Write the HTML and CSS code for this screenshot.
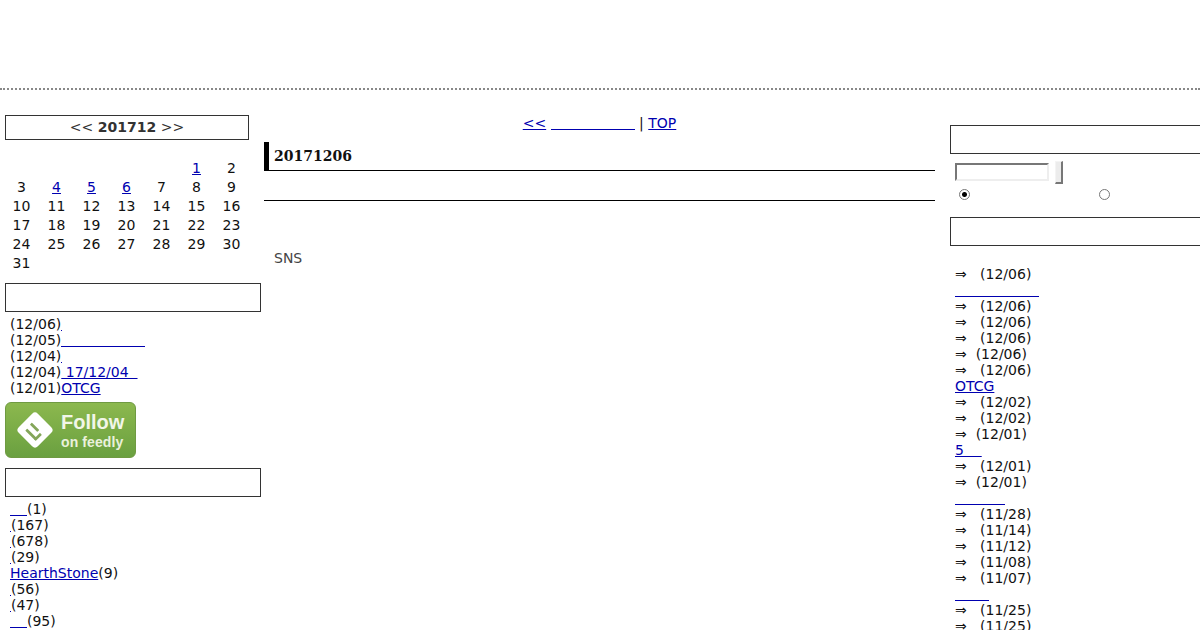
FILE: index.html
```html
<!DOCTYPE html>
<html lang="en">
<head>
    <meta charset="UTF-8">
    <meta name="viewport" content="width=device-width, initial-scale=1.0">
    <title>20171206</title>
    <link rel="stylesheet" href="styles.css">
</head>
<body>
    <div class="header"></div>

    <div class="main">
        <div class="left">
            <div class="cal-title">&lt;&lt; <b>201712</b> &gt;&gt;</div>
            <table class="calendar">
                <tr><td></td><td></td><td></td><td></td><td></td><td><a href="#">1</a></td><td>2</td></tr>
                <tr><td>3</td><td><a href="#">4</a></td><td><a href="#">5</a></td><td><a href="#">6</a></td><td>7</td><td>8</td><td>9</td></tr>
                <tr><td>10</td><td>11</td><td>12</td><td>13</td><td>14</td><td>15</td><td>16</td></tr>
                <tr><td>17</td><td>18</td><td>19</td><td>20</td><td>21</td><td>22</td><td>23</td></tr>
                <tr><td>24</td><td>25</td><td>26</td><td>27</td><td>28</td><td>29</td><td>30</td></tr>
                <tr><td>31</td><td></td><td></td><td></td><td></td><td></td><td></td></tr>
            </table>

            <div class="box"></div>
            <ul class="list">
                <li>(12/06)<a href="#" class="blank w1"></a></li>
                <li>(12/05)<a href="#" class="blank w84"></a></li>
                <li>(12/04)<a href="#" class="blank w1"></a></li>
                <li>(12/04)<a href="#">&nbsp;17/12/04&nbsp;&nbsp;</a></li>
                <li>(12/01)<a href="#">OTCG</a></li>
            </ul>

            <a href="#" class="feedly">
                <svg class="feedly-icon" width="38" height="38" viewBox="0 0 38 38">
                    <rect x="5.5" y="5.5" width="27" height="27" rx="4" transform="rotate(45 19 19)" fill="#fff"/>
                    <g fill="#84a65a" transform="rotate(45 19 19)">
                        <rect x="11.5" y="16" width="10.5" height="2.8" rx="0.6"/>
                        <rect x="12.5" y="23.5" width="13" height="2.8" rx="0.6"/>
                        <rect x="24.5" y="17.5" width="2.8" height="8.8" rx="0.6"/>
                    </g>
                </svg>
                <span class="feedly-text">
                    <span class="feedly-follow">Follow</span>
                    <span class="feedly-on">on feedly</span>
                </span>
            </a>

            <div class="box box-cats"></div>
            <ul class="list">
                <li><a href="#" class="blank w17"></a>(1)</li>
                <li><a href="#" class="blank w1"></a>(167)</li>
                <li><a href="#" class="blank w1"></a>(678)</li>
                <li><a href="#" class="blank w1"></a>(29)</li>
                <li><a href="#">HearthStone</a>(9)</li>
                <li><a href="#" class="blank w1"></a>(56)</li>
                <li><a href="#" class="blank w1"></a>(47)</li>
                <li><a href="#" class="blank w17"></a>(95)</li>
            </ul>
        </div>

        <div class="center">
            <div class="nav"><a href="#">&lt;&lt;</a> <a href="#" class="blank w84"></a> | <a href="#">TOP</a></div>
            <h2 class="entry-title">20171206</h2>
            <div class="entry-body"></div>
            <p class="sns">SNS</p>
        </div>

        <div class="right">
            <div class="box"></div>
            <div class="search">
                <span class="search-input"></span>
                <span class="search-button"></span>
            </div>
            <div class="radios">
                <span class="radio checked"></span>
                <span class="radio"></span>
            </div>
            <div class="box box-recent"></div>
            <ul class="list recent">
                <li>⇒&nbsp;&nbsp;&nbsp;(12/06)</li>
                <li><a href="#" class="blank w84"></a></li>
                <li>⇒&nbsp;&nbsp;&nbsp;(12/06)</li>
                <li>⇒&nbsp;&nbsp;&nbsp;(12/06)</li>
                <li>⇒&nbsp;&nbsp;&nbsp;(12/06)</li>
                <li>⇒&nbsp;&nbsp;(12/06)</li>
                <li>⇒&nbsp;&nbsp;&nbsp;(12/06)</li>
                <li><a href="#">OTCG</a></li>
                <li>⇒&nbsp;&nbsp;&nbsp;(12/02)</li>
                <li>⇒&nbsp;&nbsp;&nbsp;(12/02)</li>
                <li>⇒&nbsp;&nbsp;(12/01)</li>
                <li><a href="#">5&nbsp;&nbsp;&nbsp;&nbsp;</a></li>
                <li>⇒&nbsp;&nbsp;&nbsp;(12/01)</li>
                <li>⇒&nbsp;&nbsp;(12/01)</li>
                <li><a href="#" class="blank w50"></a></li>
                <li>⇒&nbsp;&nbsp;&nbsp;(11/28)</li>
                <li>⇒&nbsp;&nbsp;&nbsp;(11/14)</li>
                <li>⇒&nbsp;&nbsp;&nbsp;(11/12)</li>
                <li>⇒&nbsp;&nbsp;&nbsp;(11/08)</li>
                <li>⇒&nbsp;&nbsp;&nbsp;(11/07)</li>
                <li><a href="#" class="blank w34"></a></li>
                <li>⇒&nbsp;&nbsp;&nbsp;(11/25)</li>
                <li>⇒&nbsp;&nbsp;&nbsp;(11/25)</li>
            </ul>
        </div>
    </div>
</body>
</html>
```

FILE: styles.css
```css
/* General Styling */
* {
    box-sizing: border-box;
}

html, body {
    height: 630px;
    overflow: hidden;
}

body {
    margin: 0;
    font-family: "DejaVu Sans", sans-serif;
    font-size: 14px;
    line-height: 16px;
    color: #111;
    background: #fff;
}

a {
    color: #0000b0;
}

.header {
    height: 90px;
    border-bottom: 2px dotted #888;
}

.main {
    display: grid;
    grid-template-columns: 259px 671px 270px;
    padding-left: 5px;
}

/* Empty underlined links */
.blank {
    display: inline-block;
    height: 15px;
    border-bottom: 1px solid #0000b0;
    vertical-align: top;
}

.w1 { width: 1px; }
.w17 { width: 17px; }
.w34 { width: 34px; }
.w50 { width: 50px; }
.w84 { width: 84px; }

.box {
    width: 256px;
    height: 29px;
    border: 1px solid #333;
}

.list {
    list-style: none;
    margin: 4px 0 0;
    padding: 0 0 0 5px;
}

/* Left column */
.left {
    padding-top: 25px;
}

.cal-title {
    width: 244px;
    height: 25px;
    border: 1px solid #333;
    line-height: 23px;
    text-align: center;
    color: #333;
}

.calendar {
    border-collapse: collapse;
    margin-top: 18px;
    margin-left: -1px;
}

.calendar td {
    width: 35px;
    height: 19px;
    padding: 0;
    text-align: center;
}

.calendar + .box {
    margin-top: 11px;
}

.feedly {
    display: flex;
    align-items: center;
    gap: 7px;
    width: 131px;
    height: 56px;
    margin-top: 6px;
    padding-left: 10px;
    border: 1px solid #6f9a42;
    border-radius: 6px;
    background: linear-gradient(#8cb84e, #6aa040);
    color: #fff;
    text-decoration: none;
    font-family: "Liberation Sans", sans-serif;
    font-weight: bold;
}

.feedly-text {
    display: flex;
    flex-direction: column;
}

.feedly-follow {
    font-size: 20px;
    line-height: 23px;
    color: #f2f6e8;
}

.feedly-on {
    font-size: 14px;
    line-height: 16px;
    letter-spacing: 0.1px;
    color: #eaf1dc;
}

.left .box-cats {
    margin-top: 10px;
}

/* Center column */
.center {
    padding-top: 25px;
}

.nav {
    text-align: center;
}

.entry-title {
    height: 29px;
    margin: 11px 0 0;
    padding-left: 5px;
    border-left: 5px solid #000;
    border-bottom: 1px solid #000;
    font-family: "DejaVu Serif", serif;
    font-size: 14px;
    line-height: 28px;
}

.entry-body {
    height: 30px;
    border-bottom: 1px solid #000;
}

.sns {
    margin: 49px 0 0;
    padding-left: 10px;
    color: #444;
}

/* Right column */
.right {
    padding-top: 35px;
    margin-left: 15px;
}

.right .box {
    width: 270px;
}

.search {
    display: flex;
    align-items: flex-start;
    gap: 6px;
    margin: 7px 0 0 5px;
}

.search-input {
    width: 94px;
    height: 18px;
    margin-top: 2px;
    border: 2px solid;
    border-color: #777 #eee #eee #777;
}

.search-button {
    width: 8px;
    height: 23px;
    border: 1px solid;
    border-color: #f4f4f4 #777 #777 #f4f4f4;
    border-width: 1px 2px 2px 1px;
    background: #ececec;
}

.radios {
    display: flex;
    gap: 129px;
    margin: 5px 0 0 9px;
}

.radio {
    width: 11px;
    height: 11px;
    border: 1px solid #777;
    border-radius: 50%;
}

.radio.checked {
    background: radial-gradient(circle, #000 0, #000 2px, #fff 3px);
}

.right .box-recent {
    margin-top: 17px;
}

.recent {
    margin-top: 20px;
}
```
